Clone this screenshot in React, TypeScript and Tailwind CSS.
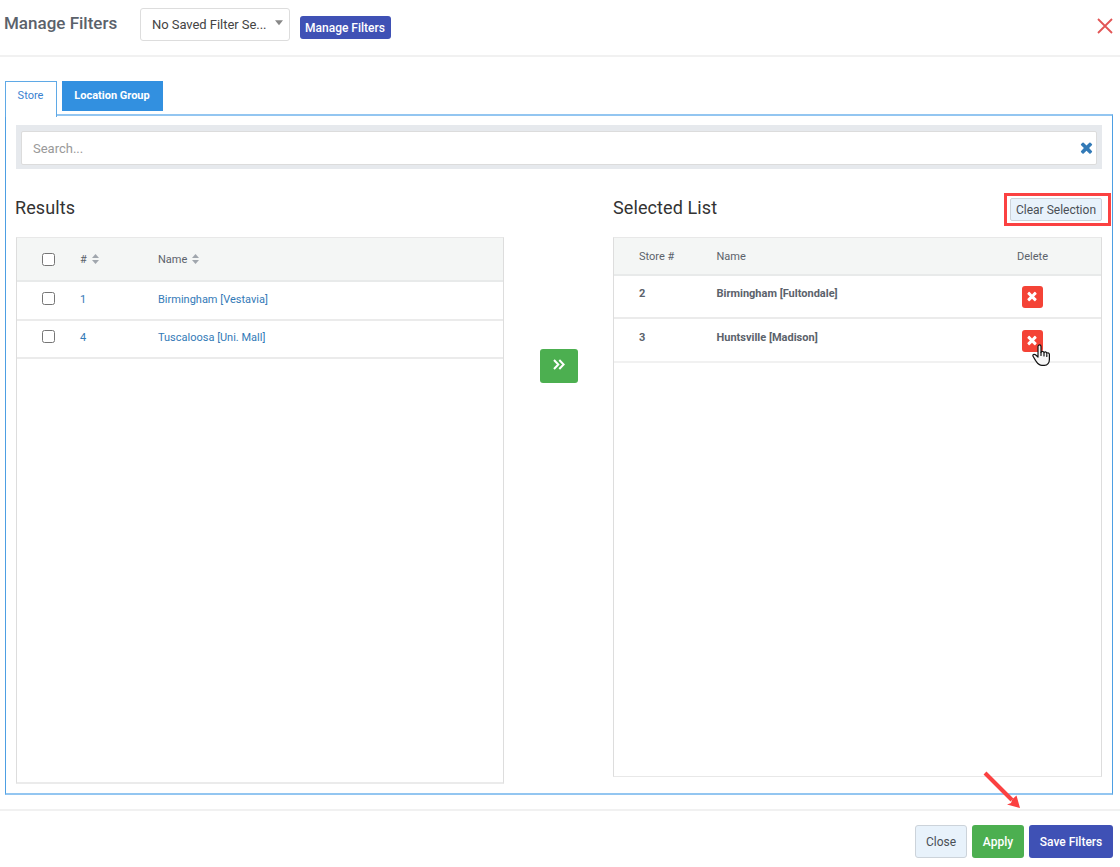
import { useState } from "react"
import clsx from "clsx"

interface Store {
  id: number
  name: string
}

const RESULTS: Store[] = [
  { id: 1, name: "Birmingham [Vestavia]" },
  { id: 4, name: "Tuscaloosa [Uni. Mall]" },
]

const SELECTED: Store[] = [
  { id: 2, name: "Birmingham [Fultondale]" },
  { id: 3, name: "Huntsville [Madison]" },
]

function TimesIcon({ className }: { className?: string }) {
  return (
    <svg className={className} viewBox="0 0 1792 1792" fill="currentColor">
      <path d="M1490 1322q0 40-28 68l-136 136q-28 28-68 28t-68-28l-294-294-294 294q-28 28-68 28t-68-28l-136-136q-28-28-28-68t28-68l294-294-294-294q-28-28-28-68t28-68l136-136q28-28 68-28t68 28l294 294 294-294q28-28 68-28t68 28l136 136q28 28 28 68t-28 68l-294 294 294 294q28 28 28 68z" />
    </svg>
  )
}

function SortIcon() {
  return (
    <svg className="w-[7px] h-[10px] mb-[2px] text-[#a0a6ad]" viewBox="0 0 7 10" fill="currentColor">
      <path d="M0 4 3.5 0 7 4zM0 6h7L3.5 10z" />
    </svg>
  )
}

function HandCursor() {
  return (
    <svg className="absolute left-[10px] top-[14px] w-[19px] h-[23px] z-10" viewBox="0 0 19 23" fill="#f7f7f7" stroke="#111" strokeWidth="1.2" strokeLinejoin="round">
      <path d="M6 13V2.6C6 .4 9 .4 9 2.6V8.500C9 7 12 7 12 9c0-1.600 2.800-1.400 2.800.6 0-1.300 2.600-1.100 2.600.8v5c0 3-1.800 6-5 6H10c-3.500 0-5-3-6.500-5L1.200 12.500C.2 10.800 2 9.600 3.500 10.800z" />
      <path d="M9 8.500v3M12 9.500v2.500M14.800 10.500v2" fill="none" strokeLinecap="round" />
    </svg>
  )
}

function Checkbox() {
  return <input type="checkbox" className="block m-0 w-[13px] h-[13px]" />
}

export default function App() {
  const [tab, setTab] = useState("store")
  const [search, setSearch] = useState("")

  return (
    <div className="w-[1120px] h-[867px] bg-white overflow-hidden flex flex-col font-[Roboto,sans-serif] text-[#5b626b]">
      {/* Header */}
      <div className="h-[57px] shrink-0 flex items-start border-b-2 border-[#f1f1f1] pl-1">
        <h1 className="w-[136px] pt-[11px] text-[17px] leading-6 font-medium">Manage Filters</h1>
        <button className="mt-2 w-[150px] h-[33px] flex items-center justify-between pl-[11px] pr-[6px] border border-[#ddd] rounded-[3px] text-[13px] text-[#444] tracking-[-0.05px] whitespace-nowrap">
          No Saved Filter Se...
          <svg className="w-2 h-[6px] mb-[3px]" viewBox="0 0 9 6" fill="#888"><path d="M0 0h9L4.500 5.500z" /></svg>
        </button>
        <button className="mt-4 ml-[10px] w-[91px] h-[23px] pr-px rounded-[3px] bg-[#3f51b5] text-white text-[12px] font-medium whitespace-nowrap">
          Manage Filters
        </button>
        <button className="ml-auto mr-[7px] mt-[18px]">
          <svg className="w-4 h-4" viewBox="0 0 16 16" stroke="#e25555" strokeWidth="1.800"><path d="M1 1l14 14M15 1 1 15" /></svg>
        </button>
      </div>

      {/* Tabs */}
      <div className="mt-6 ml-[5px] h-[33px] shrink-0 flex items-start gap-[5px] text-[11px]">
        <button
          onClick={() => setTab("store")}
          className={clsx("relative z-10 w-[52px] h-9 pb-[6px] pr-px bg-white border border-b-0 border-[#5fa9e6] text-[#3b82d0]", tab === "store" && "font-normal")}
        >
          Store
        </button>
        <button onClick={() => setTab("group")} className="w-[101px] h-[30px] pt-px pr-px bg-[#3290e0] text-white font-bold">
          Location Group
        </button>
      </div>

      <div className="ml-[5px] w-[1108px] h-[681px] shrink-0 border-x border-y-2 border-x-[#4d9fe3] border-y-[#93c6f1] px-[10px] pt-[9px]">
        {/* Search */}
        <div className="w-[1086px] h-11 bg-[#e6e9ed] p-[5px] pt-[6px]">
          <div className="h-[34px] flex items-center bg-white border border-[#dcdcdc] rounded-[2px] pl-[11px] pr-px">
            <input
              value={search}
              onChange={(e) => setSearch(e.target.value)}
              placeholder="Search..."
              className="flex-1 pt-px text-[13px] outline-none placeholder:text-[#999]"
            />
            <button onClick={() => setSearch("")} className="pb-[2px]">
              <TimesIcon className="w-[17px] h-[17px] text-[#337ab7]" />
            </button>
          </div>
        </div>

        <div className="mt-6 flex">
          {/* Results */}
          <div className="w-[488px]">
            <h2 className="h-11 pt-[3px] -ml-px text-[18px] leading-6 tracking-[0.1px] text-[#333]">Results</h2>
            <div className="h-[547px] border-x border-t border-b-2 border-x-[#ddd] border-t-[#e8e8e8] border-b-[#ebebeb] text-[11px]">
              <div className="h-[44px] flex items-center pl-[25px] bg-[#f4f6f5] border-b-2 border-[#e8eaea]">
                <div className="w-[38px]"><Checkbox /></div>
                <div className="w-[78px] flex items-center gap-[5px] pt-[2px]"># <SortIcon /></div>
                <div className="flex items-center gap-[5px] pt-[2px]">Name <SortIcon /></div>
              </div>
              {RESULTS.map((s, i) => (
                <div key={s.id} className={clsx("flex items-center pl-[25px] border-b-2 border-[#ebebeb] text-[#337ab7]", i === 0 ? "h-[39px]" : "h-[38px] pb-px")}>
                  <div className="w-[38px] pb-1"><Checkbox /></div>
                  <div className="w-[78px]">{s.id}</div>
                  <div>{s.name}</div>
                </div>
              ))}
            </div>
          </div>

          <div className="w-[109px] pl-9 pt-[156px]">
            <button className="w-[38px] h-[34px] flex items-center justify-center pb-[3px] pr-px rounded-[3px] bg-[#4caf50]">
              <svg className="w-3 h-[11px]" viewBox="0 0 12 11" fill="none" stroke="#fff" strokeWidth="2"><path d="M1 1l4.300 4.500L1 10M6.300 1l4.300 4.500L6.300 10" /></svg>
            </button>
          </div>

          {/* Selected list */}
          <div className="w-[489px]">
            <div className="h-11 flex justify-between">
              <h2 className="pt-[3px] text-[18px] leading-6 tracking-[0.1px] text-[#333]">Selected List</h2>
              <button className="relative mt-[5px] w-[92px] h-[23px] bg-[#e8f2fb] border border-[#ccd3da] rounded-[2px] pt-px text-[12px] text-[#4a4f55] whitespace-nowrap">
                Clear Selection
                <span className="absolute -left-[7px] -top-[6px] w-[107px] h-[33px] border-3 border-[#fb4141]" />
              </button>
            </div>
            <div className="h-[540px] border border-x-[#ddd] border-y-[#e8e8e8] text-[11px]">
              <div className="h-[38px] flex items-center pt-[2px] pl-[25px] bg-[#f4f6f5] border-b-2 border-[#e8eaea]">
                <div className="w-[78px]">Store #</div>
                <div className="flex-1 -ml-[0.5px]">Name</div>
                <div className="w-[135px] pl-[51px]">Delete</div>
              </div>
              {SELECTED.map((s, i) => (
                <div key={s.id} className={clsx("flex pl-[25px] border-b-2 font-bold", i === 0 ? "h-[43px] border-[#ebebeb]" : "h-[44px] border-[#f1f1f1]")}>
                  <div className={clsx("w-[78px]", i === 0 ? "pt-[10px]" : "pt-[11px]")}>{s.id}</div>
                  <div className={clsx("flex-1 -ml-[0.5px]", i === 0 ? "pt-[10px]" : "pt-[11px]")}>{s.name}</div>
                  <div className={clsx("w-[79px]", i === 0 ? "pt-[9.5px]" : "pt-[10.5px]")}>
                    <button className="relative w-[21px] h-[22px] flex items-center justify-center pb-px pr-px rounded-[3px] bg-[#f44336] text-white">
                      <TimesIcon className="w-[14px] h-[14px]" />
                      {i === 1 && <HandCursor />}
                    </button>
                  </div>
                </div>
              ))}
            </div>
          </div>
        </div>
      </div>

      {/* Footer */}
      <div className="relative mt-[14px] border-t-2 border-[#f1f1f1] flex justify-end gap-[5px] pt-[14px] pr-[7px] text-[12px]">
        <button className="w-[52px] h-[33px] pt-px rounded-[3px] bg-[#e8f2fb] border border-[#ccd3da] text-[#4a4f55]">Close</button>
        <button className="w-[52px] h-[33px] pt-px rounded-[3px] bg-[#4caf50] text-white font-medium">Apply</button>
        <button className="w-[84px] h-[33px] pt-px rounded-[3px] bg-[#3f51b5] text-white font-medium">Save Filters</button>
        <svg className="absolute left-[980px] -top-[42px] w-[44px] h-[42px]" viewBox="0 0 44 42">
          <path d="M5 4 32 31" stroke="#fb4141" strokeWidth="4" />
          <path d="M40 39 36.500 26.500 32.500 30 31 34 27 35.500z" fill="#fb4141" />
        </svg>
      </div>
    </div>
  )
}
